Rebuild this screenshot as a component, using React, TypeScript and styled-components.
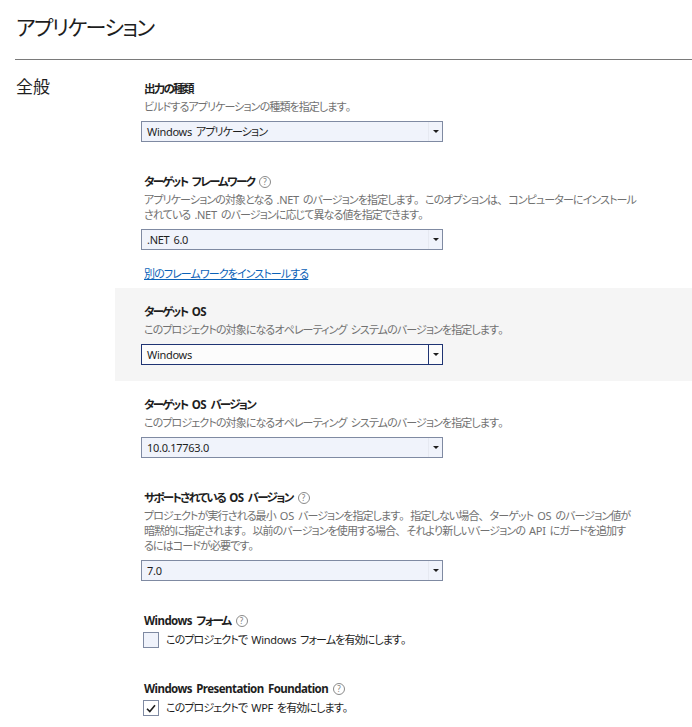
import React from "react";
import styled, { createGlobalStyle } from "styled-components";

const GlobalStyle = createGlobalStyle`
  html, body {
    margin: 0;
    padding: 0;
    background: #ffffff;
  }
  body {
    font-family: "Noto Sans", "Noto Sans CJK JP", sans-serif;
    font-feature-settings: "palt" 1;
    color: #1e1e1e;
    font-size: 11px;
    letter-spacing: -0.9px;
  }
`;

const Page = styled.div`
  width: 692px;
  overflow: hidden;
`;

const Header = styled.div`
  margin-left: 15px;
  padding: 12px 0 0 1px;
  height: 47px;
  border-bottom: 1px solid #7a7a7a;
`;

const Title = styled.h1`
  margin: 0;
  font-size: 21px;
  font-weight: 400;
  line-height: 30px;
  letter-spacing: -1.5px;
  color: #1e1e1e;
`;

const Body = styled.div`
  display: flex;
  padding-top: 5px;
`;

const Category = styled.div`
  width: 99px;
  padding: 12px 0 0 16px;
  font-size: 17px;
  line-height: 20px;
  letter-spacing: 0;
  color: #1e1e1e;
`;

const Column = styled.div`
  flex: 1;
  display: flex;
  flex-direction: column;
`;

const Section = styled.div<{ $active?: boolean }>`
  padding: 13px 0 16px 26px;
  background: ${(p) => (p.$active ? "#f5f5f5" : "transparent")};
`;

const Label = styled.div`
  display: flex;
  align-items: center;
  gap: 5px;
  padding-left: 3px;
  font-size: 11.5px;
  font-weight: 700;
  letter-spacing: -1.7px;
  line-height: 21px;
  height: 21px;
  & > span > span {
    letter-spacing: -0.55px;
    word-spacing: 1.8px;
  }
`;

const Latin = styled.span`
  letter-spacing: -0.3px;
  word-spacing: 1.5px;
`;

const Punct = styled.span`
  font-feature-settings: "palt" 0;
  letter-spacing: 0;
`;

const Help = styled.span`
  display: inline-flex;
  align-items: center;
  justify-content: center;
  width: 10px;
  height: 10px;
  border: 1px solid #8a8a8a;
  border-radius: 50%;
  font-size: 8px;
  font-weight: 400;
  letter-spacing: 0;
  line-height: 1;
  color: #7a7a7a;
`;

const Desc = styled.div`
  padding-left: 3px;
  color: #717171;
  white-space: nowrap;
`;

const Line = styled.div`
  height: 15px;
  line-height: 15px;
`;

const Select = styled.div<{ $focused?: boolean }>`
  margin-top: 7px;
  width: 302px;
  height: 21px;
  box-sizing: border-box;
  display: flex;
  border: 1px solid ${(p) => (p.$focused ? "#1f3473" : "#7f8aa2")};
  background: ${(p) => (p.$focused ? "#fcfcfc" : "#f0f3fb")};
`;

const Value = styled.div`
  flex: 1;
  padding-left: 5px;
  line-height: 19px;
  color: #1e1e1e;
`;

const Arrow = styled.div<{ $focused?: boolean }>`
  width: 13px;
  display: flex;
  align-items: center;
  justify-content: center;
  border-left: 1px solid ${(p) => (p.$focused ? "#1f3473" : "#e6e9f1")};
  &::after {
    content: "";
    border-left: 3px solid transparent;
    border-right: 3px solid transparent;
    border-top: 3px solid #1e1e1e;
  }
`;

const Link = styled.a`
  display: block;
  margin: 0 0 6px 29px;
  line-height: 16px;
  color: #0b62b8;
  text-decoration: underline;
`;

const CheckRow = styled.label`
  display: flex;
  align-items: center;
  gap: 7px;
  height: 18px;
  padding-left: 2px;
  line-height: 18px;
  color: #1e1e1e;
`;

const Box = styled.span<{ $checked?: boolean }>`
  width: 16px;
  height: 16px;
  box-sizing: border-box;
  border: 1px solid #7f8aa2;
  background: ${(p) => (p.$checked ? "#ffffff" : "#f0f3fb")};
  display: flex;
  align-items: center;
  justify-content: center;
`;

// latin runs keep near-normal tracking, 。、 stay full width
const Jp = ({ text }: { text: string }) => (
  <>
    {text.split(/([A-Za-z0-9. ]+|[。、])/).map((s, i) => {
      if (/^[。、]$/.test(s)) return <Punct key={i}>{s}</Punct>;
      if (/[A-Za-z0-9 ]/.test(s)) return <Latin key={i}>{s}</Latin>;
      return s;
    })}
  </>
);

const Dropdown = ({ value, focused }: { value: string; focused?: boolean }) => (
  <Select $focused={focused}>
    <Value>
      <Jp text={value} />
    </Value>
    <Arrow $focused={focused} />
  </Select>
);

const Check = ({ checked, text }: { checked?: boolean; text: string }) => (
  <CheckRow>
    <Box $checked={checked}>
      {checked && (
        <svg width="10" height="9" viewBox="0 0 10 9">
          <path d="M1 4.8 L3.8 7.6 L9 1.2" fill="none" stroke="#1e1e1e" strokeWidth="1.6" />
        </svg>
      )}
    </Box>
    <span>
      <Jp text={text} />
    </span>
  </CheckRow>
);

const Description = ({ lines }: { lines: string[] }) => (
  <Desc>
    {lines.map((l, i) => (
      <Line key={i}>
        <Jp text={l} />
      </Line>
    ))}
  </Desc>
);

const Heading = ({ text, help }: { text: string; help?: boolean }) => (
  <Label>
    <span>
      <Jp text={text} />
    </span>
    {help && <Help>?</Help>}
  </Label>
);

const App = () => {
  return (
    <Page>
      <GlobalStyle />
      <Header>
        <Title>アプリケーション</Title>
      </Header>
      <Body>
        <Category>全般</Category>
        <Column>
          <Section>
            <Heading text="出力の種類" />
            <Description lines={["ビルドするアプリケーションの種類を指定します。"]} />
            <Dropdown value="Windows アプリケーション" />
          </Section>
          <Section>
            <Heading text="ターゲット フレームワーク" help />
            <Description
              lines={[
                "アプリケーションの対象となる .NET のバージョンを指定します。このオプションは、コンピューターにインストール",
                "されている .NET のバージョンに応じて異なる値を指定できます。",
              ]}
            />
            <Dropdown value=".NET 6.0" />
          </Section>
          <Link>別のフレームワークをインストールする</Link>
          <Section $active>
            <Heading text="ターゲット OS" />
            <Description lines={["このプロジェクトの対象になるオペレーティング システムのバージョンを指定します。"]} />
            <Dropdown value="Windows" focused />
          </Section>
          <Section>
            <Heading text="ターゲット OS バージョン" />
            <Description lines={["このプロジェクトの対象になるオペレーティング システムのバージョンを指定します。"]} />
            <Dropdown value="10.0.17763.0" />
          </Section>
          <Section>
            <Heading text="サポートされている OS バージョン" help />
            <Description
              lines={[
                "プロジェクトが実行される最小 OS バージョンを指定します。指定しない場合、ターゲット OS のバージョン値が",
                "暗黙的に指定されます。以前のバージョンを使用する場合、それより新しいバージョンの API にガードを追加す",
                "るにはコードが必要です。",
              ]}
            />
            <Dropdown value="7.0" />
          </Section>
          <Section>
            <Heading text="Windows フォーム" help />
            <Check text="このプロジェクトで Windows フォームを有効にします。" />
          </Section>
          <Section>
            <Heading text="Windows Presentation Foundation" help />
            <Check checked text="このプロジェクトで WPF を有効にします。" />
          </Section>
        </Column>
      </Body>
    </Page>
  );
};

export default App;
